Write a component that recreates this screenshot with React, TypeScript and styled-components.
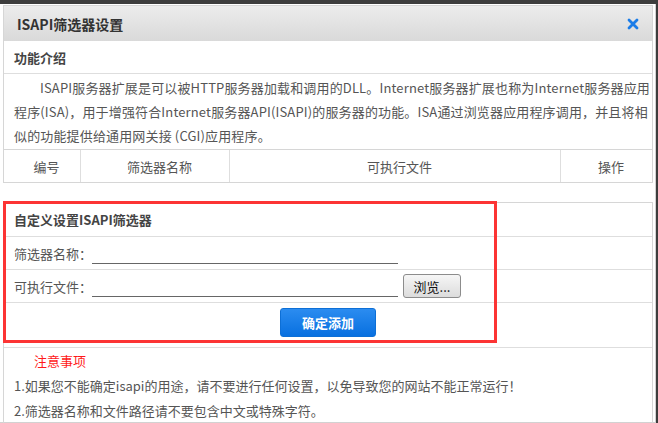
import React from 'react'
import styled, { createGlobalStyle } from 'styled-components'

const GlobalStyle = createGlobalStyle`
  html, body {
    margin: 0;
    padding: 0;
  }
  body {
    font-family: "Noto Sans CJK SC", "Noto Sans", sans-serif;
    font-size: 13px;
    color: #555;
  }
`

const Page = styled.div`
  position: relative;
  width: 658px;
  height: 423px;
  box-sizing: border-box;
  padding-top: 4px;
  background: #3d3d3d;
  overflow: hidden;
`

const Frame = styled.div`
  width: 656px;
  height: 419px;
  box-sizing: border-box;
  padding: 1px 2px 2px 3px;
  background: #fff;
  border-right: 1px solid #d2d2d2;
  border-bottom: 1px solid #d2d2d2;
`

const Box = styled.div`
  width: 650px;
  box-sizing: border-box;
  border: 1px solid #d6d6d6;
  margin-top: ${props => props.$gap || 0}px;
`

const Header = styled.div`
  height: 35px;
  display: flex;
  align-items: center;
  justify-content: space-between;
  padding: 0 13px 0 13px;
  background: linear-gradient(#ececec, #d9d9d9);
`

const Title = styled.div`
  font-size: 14px;
  font-weight: 700;
  color: #333;
`

const CloseButton = styled.button`
  width: 12px;
  height: 12px;
  padding: 0;
  border: 0;
  background: none;
  display: flex;
  cursor: pointer;
`

const Row = styled.div`
  height: ${props => props.$h || 32}px;
  display: flex;
  align-items: ${props => props.$top ? 'flex-start' : 'center'};
  justify-content: ${props => props.$center ? 'center' : 'flex-start'};
  padding: ${props => props.$top ? '5px' : '0'} 10px 0 10px;
  border-bottom: 1px solid #dedede;
`

const SectionTitle = styled.div`
  font-weight: 700;
  color: #444;
`

const Intro = styled.div`
  padding: 2px 10px 1px 10px;
  line-height: 24px;
  white-space: nowrap;
  letter-spacing: 0.15px;
`

const IntroLine = styled.div`
  padding-left: ${props => props.$indent ? 26 : 0}px;
`

const GridHead = styled.div`
  display: grid;
  grid-template-columns: 77px 149px 331px 1fr;
  height: 32px;
  border-top: 1px solid #d6d6d6;
`

const HeadCell = styled.div`
  display: flex;
  align-items: center;
  justify-content: center;
  padding-left: 9px;
  border-right: ${props => props.$last ? 'none' : '1px solid #dedede'};
`

const Label = styled.span`
  width: 78px;
  flex: none;
`

const LineInput = styled.input`
  width: 306px;
  height: 20px;
  box-sizing: content-box;
  padding: 0;
  border: 0;
  border-bottom: 1px solid #666;
  outline: none;
  background: transparent;
  font: inherit;
`

const BrowseButton = styled.button`
  margin-left: 5px;
  width: 58px;
  height: 24px;
  padding: 0;
  border: 1px solid #8c8c8c;
  border-radius: 3px;
  background: linear-gradient(#f6f6f6, #dcdcdc);
  font: inherit;
  color: #111;
`

const SubmitButton = styled.button`
  width: 96px;
  height: 29px;
  padding: 0;
  border: 1px solid #0d6fd6;
  border-radius: 3px;
  background: linear-gradient(#2b8cf0, #0870e0);
  color: #fff;
  font: inherit;
  font-weight: 700;
  font-size: 13px;
`

const Notes = styled.div`
  padding: 0 10px;
  line-height: 25px;
`

const NoteTitle = styled.div`
  color: #ff1a1a;
  padding-left: 20px;
`

const Highlight = styled.div`
  position: absolute;
  left: 3px;
  top: 201px;
  width: 494px;
  height: 142px;
  box-sizing: border-box;
  border: 3px solid #fc3434;
  pointer-events: none;
`

const CloseIcon = () => (
  <svg width="12" height="12" viewBox="0 0 12 12">
    <path d="M2 2 L10 10 M10 2 L2 10" stroke="#1a7ce8" strokeWidth="2.8" strokeLinecap="round" />
  </svg>
)

const columns = ['编号', '筛选器名称', '可执行文件', '操作']

const introLines = [
  'ISAPI服务器扩展是可以被HTTP服务器加载和调用的DLL。Internet服务器扩展也称为Internet服务器应用',
  '程序(ISA)，用于增强符合Internet服务器API(ISAPI)的服务器的功能。ISA通过浏览器应用程序调用，并且将相',
  '似的功能提供给通用网关接 (CGI)应用程序。',
]

export default function App() {
  return (
    <Page>
      <GlobalStyle />
      <Frame>
        <Box>
          <Header>
            <Title>ISAPI筛选器设置</Title>
            <CloseButton aria-label="关闭">
              <CloseIcon />
            </CloseButton>
          </Header>
          <Row>
            <SectionTitle>功能介绍</SectionTitle>
          </Row>
          <Intro>
            {introLines.map((line, i) => (
              <IntroLine key={i} $indent={i === 0}>{line}</IntroLine>
            ))}
          </Intro>
          <GridHead>
            {columns.map((c, i) => (
              <HeadCell key={c} $last={i === columns.length - 1}>{c}</HeadCell>
            ))}
          </GridHead>
        </Box>

        <Box $gap={19}>
          <Row $h={33}>
            <SectionTitle>自定义设置ISAPI筛选器</SectionTitle>
          </Row>
          <Row>
            <Label>筛选器名称：</Label>
            <LineInput />
          </Row>
          <Row>
            <Label>可执行文件：</Label>
            <LineInput />
            <BrowseButton>浏览...</BrowseButton>
          </Row>
          <Row $h={39} $center $top>
            <SubmitButton>确定添加</SubmitButton>
          </Row>
          <Notes>
            <NoteTitle>注意事项</NoteTitle>
            <div>1.如果您不能确定isapi的用途，请不要进行任何设置，以免导致您的网站不能正常运行！</div>
            <div>2.筛选器名称和文件路径请不要包含中文或特殊字符。</div>
          </Notes>
        </Box>
      </Frame>
      <Highlight />
    </Page>
  )
}
